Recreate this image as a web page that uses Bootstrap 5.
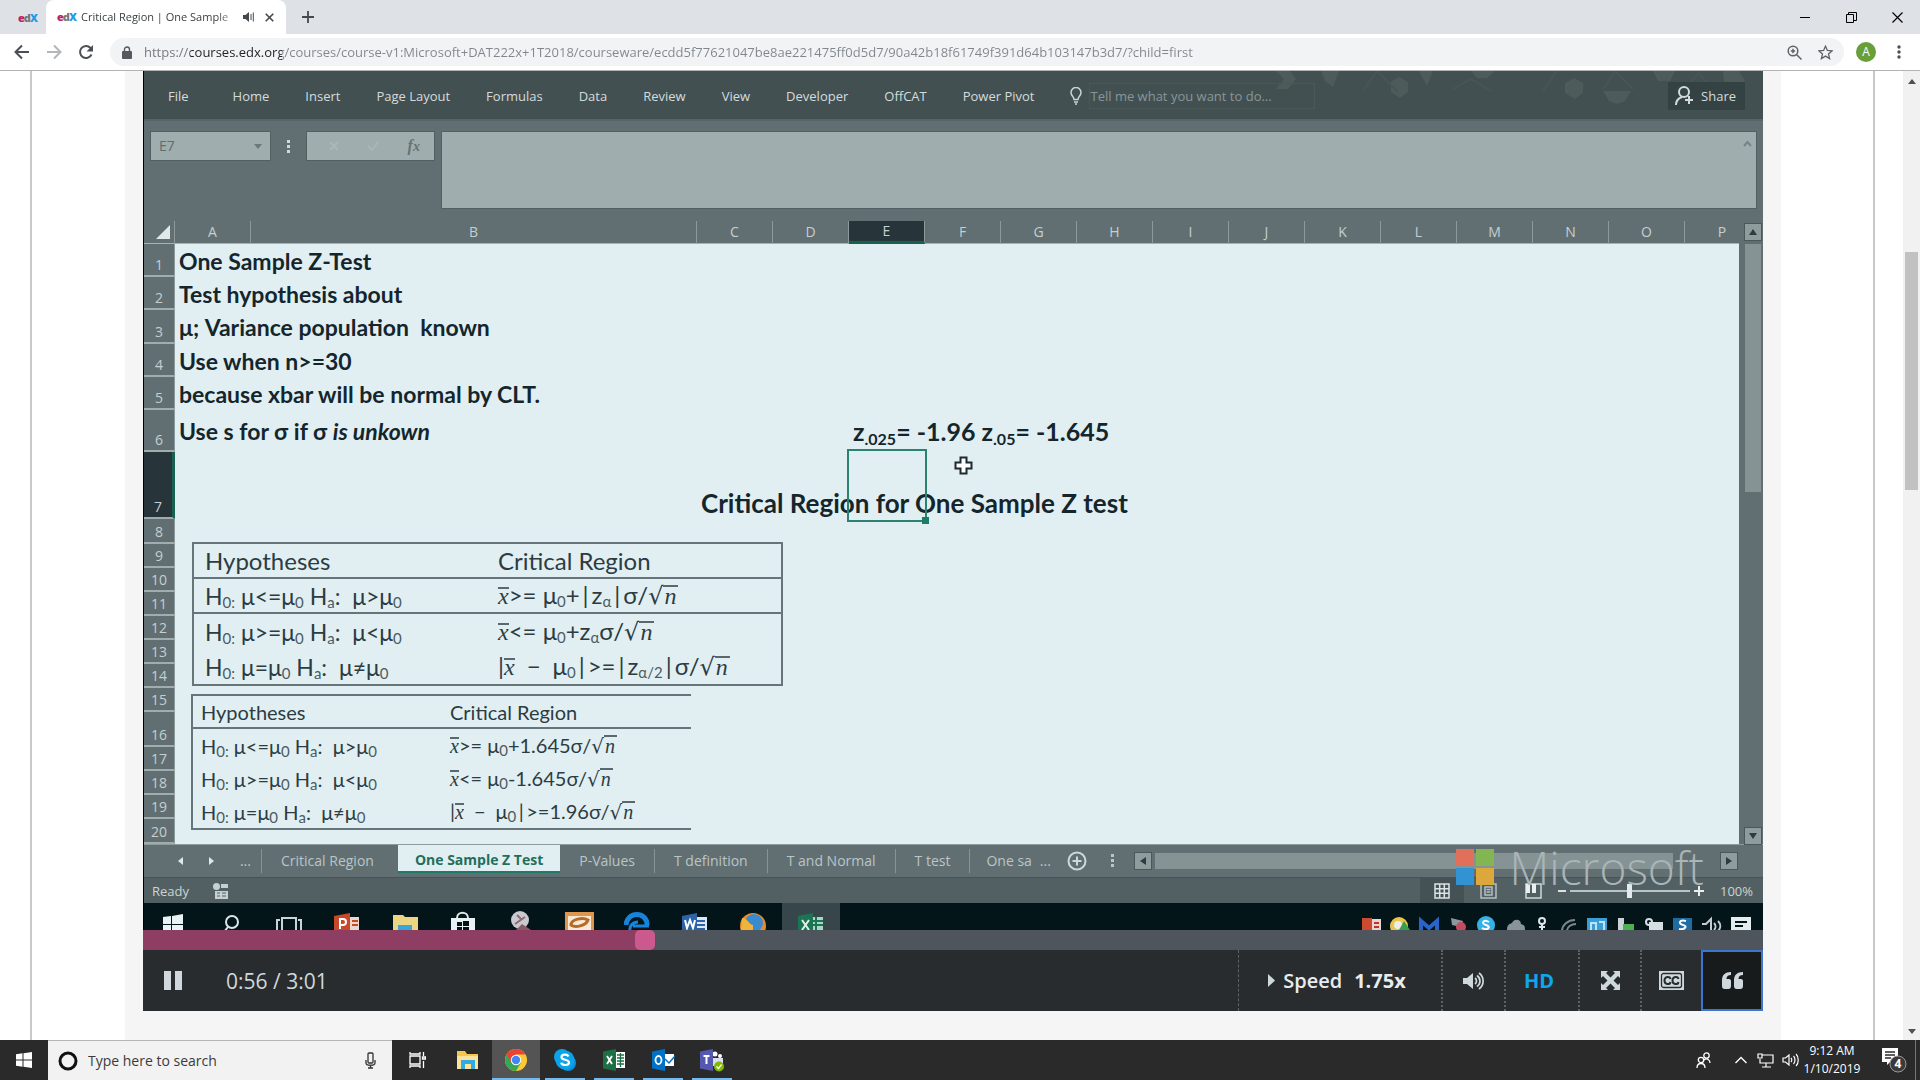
<!DOCTYPE html>
<html lang="en">
<head>
<meta charset="utf-8">
<meta name="viewport" content="width=device-width, initial-scale=1">
<title>Critical Region | One Sample</title>
<link href="https://cdn.jsdelivr.net/npm/bootstrap@5.3.0/dist/css/bootstrap.min.css" rel="stylesheet">
<style>
  body { font-family: "Open Sans", "Noto Sans", sans-serif; font-size: 14px; line-height: 20px; color: #202124; background: #fff; }
  button { border: 0; background: none; padding: 0; color: inherit; font: inherit; }
  input, textarea { font-family: inherit; }
  svg { display: block; flex: none; }

  /* browser frame */
  .tabstrip { height: 34px; background: #dee1e6; }
  .pinned { width: 46px; padding-left: 18px; }
  .edx { font: bold 11px/16px "Open Sans", sans-serif; width: 17px; }
  .edx b:nth-child(1) { color: #b52567; } .edx b:nth-child(2) { color: #777; } .edx b:nth-child(3) { color: #1f9be5; }
  .edx b { margin-right: -1px; }
  .live-tab { width: 240px; background: #fff; border-radius: 8px 8px 0 0; padding: 0 12px 0 11px; font-size: 11px; }
  .tab-title { width: 154px; margin-left: 7px; white-space: nowrap; overflow: hidden; -webkit-mask-image: linear-gradient(90deg,#000 88%,rgba(0,0,0,.3)); mask-image: linear-gradient(90deg,#000 88%,rgba(0,0,0,.3)); color: #3c4043; }
  .winbtn { width: 46px; height: 34px; }
  .toolbar { height: 37px; border-bottom: 1px solid #b3b3b3; padding: 4px 19px 4px 14px; }
  .omni { height: 28px; border-radius: 14px; background: #f1f3f4; padding: 0 11px 0 12px; }
  .omni input { border: 0; outline: 0; padding: 0 0 0 4px; font-size: 13px; color: #80868b; background: linear-gradient(90deg,#70757a 50px,#202124 50px,#202124 142px,#80868b 142px); -webkit-background-clip: text; background-clip: text; -webkit-text-fill-color: transparent; }
  .avatar { width: 20px; height: 20px; border-radius: 50%; background: #689f38; color: #fff; font-size: 12px; margin: 0 21px 0 12px; }

  /* course page */
  .course { min-width: 0; margin-left: 30px; margin-right: 28px; border: solid #c8c8c8; border-width: 0 2px; padding: 0 92px 0 93px; }
  .player-wrap { background: #f5f5f5; padding: 0 18px; height: 100%; }
  .page-scroll { flex: none; width: 17px; background: #f1f1f1; padding-top: 4px; padding-bottom: 6px; }
  .page-thumb { width: 13px; height: 238px; background: #c1c1c1; margin-top: 168px; }

  /* spreadsheet inside the video */
  .video { background: #626f72; border-left: 1px solid #000; color: #c9d4d5; }
  .ribbon { height: 48px; background: #435052; padding: 2px 18px 0 24px; gap: 36px; font-size: 13px; font-weight: 500; color: #d3dcdd; }
  .ribbon .pattern { position: absolute; right: 0; top: 0; }
  .ribbon input { width: 226px; height: 26px; border: 1px solid #4a585a; background: transparent; color: #899698; padding: 0; font-size: 13px; margin-left: 7px; }
  .ribbon input::placeholder { color: #899698; opacity: 1; }
  .share { background: #354244; height: 28px; padding: 0 9px 0 7px; gap: 7px; }
  .fbar { height: 102px; padding: 11px 7px 13px 7px; border-top: 2px solid #586568; }
  .fbox { height: 28px; background: #a0adae; color: #667375; box-shadow: 0 0 0 1px #536063; }
  .fbox input { width: 95px; border: 0; background: transparent; color: #5f6d6f; padding: 0; font-size: 14px; }
  .fxbox { width: 127px; }
  .formula { background: #a0adae; border: 0; resize: none; height: 76px; display: block; box-shadow: 0 0 0 1px #536063; }
  .sheet { table-layout: fixed; width: 100%; border-collapse: separate; border-spacing: 0; color: #14262c; background: #e1eff3; font: bold 23px/28px Lato, "Open Sans", sans-serif; }
  .sheet th { background: #626f72; color: #c4cfd1; font: 14px/18px "Open Sans", sans-serif; text-align: center; padding: 0; }
  .sheet thead th { height: 23px; border-right: 1px solid #8c999b; border-bottom: 1px solid #a5b1b3; }
  .sheet thead th:last-child { border-right: 0; padding-left: 20px; }
  .sheet tbody th { vertical-align: bottom; border-bottom: 2px solid #a0acae; border-right: 1px solid #8c999b; padding-bottom: 1px; }
  .sheet td { padding: 0 0 0 4px; white-space: nowrap; overflow: visible; vertical-align: middle; }
  .sheet thead th.on { background: #27343a; border-bottom: 3px solid #16614f; color: #c4cfd1; }
  .sheet tbody th.on { background: #27343a; border-right: 3px solid #16614f; }
  .sheet .zvals { font-size: 25px; }
  .sheet .heading { font-size: 26px; padding-bottom: 2px; }
  .sheet .cursor-cell { position: relative; }
  .sheet .cursor-cell::before { content: ""; position: absolute; inset: -3px -2px -3px -2px; border: 2px solid #2b8270; }
  .sheet .cursor-cell::after { content: ""; position: absolute; right: -4px; bottom: -5px; width: 7px; height: 7px; background: #1f7a66; }
  .sheet sub { font-size: 16px; line-height: 0; }
  .pointer { position: absolute; left: 810px; top: 235px; }
  .eq { position: absolute; color: #2c3c42; font: 24px/26px Lato, "Open Sans", sans-serif; border: 2px solid #66757a; border-spacing: 0; border-collapse: separate; table-layout: fixed; }
  .eq th, .eq td { font-weight: 400; white-space: nowrap; padding: 0; text-align: left; vertical-align: middle; }
  .eq sub { font-size: 15px; line-height: 0; bottom: -3px; color: #4c5b60; }
  .eq .rule > * { border-bottom: 2px solid #66757a; }
  .eq-one { left: 48px; top: 321px; width: 591px; }
  .eq-one tr { height: 35px; } .eq-one tr > :first-child { width: 304px; padding-left: 11px; }
  .eq-one td:first-child { font-size: 23px; }
  .eq-two { left: 47px; top: 473px; width: 500px; border-right: 0; font-size: 20px; }
  .eq-two tr { height: 33px; } .eq-two tr > :first-child { width: 257px; padding-left: 8px; }
  .vx { font-family: "Liberation Serif", serif; font-style: italic; }
  .bar { border-top: 2px solid #5a696e; line-height: 15px; display: inline-block; }
  .root { border-top: 2px solid #5a696e; line-height: 19px; display: inline-block; font-family: "Liberation Serif", serif; font-style: italic; padding: 0 2px 0 1px; }
  .surd { font-family: "DejaVu Sans", sans-serif; }
  .vscroll { width: 24px; padding: 3px 5px 0 6px; }
  .sbtn { width: 16px; height: 16px; background: #8e9c9e; box-shadow: 0 0 0 1px #4b585b; }
  .vthumb { width: 16px; height: 248px; background: #859395; }
  .sheet-tabs { height: 33px; border-top: 1px solid #8e9b9d; font-size: 14px; color: #b9c5c7; }
  .sheet-tabs .stab { height: 24px; padding: 0 19px; border-right: 1px solid #879496; }
  .sheet-tabs .tabnav { width: 118px; padding: 0 10px 0 34px; }
  .sheet-tabs .stab.live { height: 28px; align-self: flex-start; background: #e1eff3; color: #1f6f5c; font-weight: 700; border: 0; border-bottom: 2px solid #1f7a66; padding: 4px 17px 0; }
  .sheet-tabs .far { margin-right: 26px; }
  .hthumb { height: 16px; background: #859395; }
  .statusbar { height: 26px; background: #536063; border-top: 1px solid #46545a; font-size: 13px; padding: 0 10px 0 8px; }
  .zoomer { -webkit-appearance: none; appearance: none; width: 120px; height: 14px; background: linear-gradient(#b9c4c6,#b9c4c6) center/100% 2px no-repeat; }
  .zoomer::-webkit-slider-thumb { -webkit-appearance: none; width: 5px; height: 14px; background: #e2eaeb; }
  .view-on { width: 44px; height: 25px; background: #445155; }
  .brand { position: absolute; right: 59px; bottom: 39px; gap: 16px; }
  .brand span { font: 300 46px/48px "Open Sans", Lato, sans-serif; color: #a9b5b7; }
  .inner-bar { height: 27px; background: #04151a; overflow: hidden; }
  .inner-bar .slot { width: 58px; }
  .inner-bar .slot.on { background: #37464b; }

  /* player controls */
  .seek { -webkit-appearance: none; appearance: none; display: block; width: 100%; height: 20px; margin: 0; background: linear-gradient(90deg,#8e3e63 31%,#4f555c 31%); }
  .seek::-webkit-slider-thumb { -webkit-appearance: none; width: 20px; height: 20px; border-radius: 5px; background: #cb598d; }
  .controls { height: 61px; background: #282c2e; color: #cfd8dc; font-size: 20px; }
  .controls .ctl { height: 61px; border-left: 2px dotted #5b6367; }
  .controls .speed { width: 203px; padding-right: 6px; color: #e7ecee; border-left: 1px dashed #5b6367; }
  .controls .hd { width: 74px; padding-right: 6px; color: #0ea6ec; }
  .controls .quote { border: 2px solid #3b75d0; background: #171b1c; }
  .elapsed { margin-left: 43px; font-size: 21px; }

  /* desktop taskbar */
  .desk { height: 40px; background: #2a2a2a; color: #fff; }
  .start { width: 48px; height: 40px; }
  .search { width: 344px; height: 40px; background: #f2f2f2; border-top: 1px solid #b5b5b5; color: #3b3b3b; padding: 0 12px 0 10px; }
  .search input { border: 0; background: transparent; outline: 0; font-size: 14px; color: #3b3b3b; padding: 0; margin-left: 10px; }
  .search input::placeholder { color: #3b3b3b; opacity: 1; }
  .app { width: 49px; height: 40px; border-right: 1px solid transparent; background-clip: padding-box; }
  .app:first-child { width: 51px; }
  .app.run { background: linear-gradient(#76b9ed,#76b9ed) center bottom/40px 2px no-repeat; }
  .app.on { background: linear-gradient(#76b9ed,#76b9ed) center bottom/100% 2px no-repeat padding-box, #545454 padding-box; }
  .tray { gap: 9px; }
  .clock { font-size: 12px; line-height: 18px; width: 66px; }
  .peek { width: 5px; border-left: 1px solid #777; }
</style>
<script src="https://cdn.jsdelivr.net/npm/bootstrap@5.3.0/dist/js/bootstrap.bundle.min.js"></script>
</head>
<body class="vh-100 d-flex flex-column overflow-hidden">

<header>
  <div class="tabstrip d-flex">
    <button class="pinned text-start" aria-label="edX tab"><span class="edx"><b>e</b><b>d</b><b>X</b></span></button>
    <div class="live-tab d-flex align-items-center">
      <span class="edx"><b>e</b><b>d</b><b>X</b></span>
      <span class="tab-title">Critical Region | One Sample</span>
      <svg class="ms-2" width="12" height="12" viewBox="0 0 12 12" fill="#45494d"><path d="M0 4h2.500L6 1v10L2.500 8H0zM7.500 3h1v6h-1zM9.800 1.500h1v9h-1z"/></svg>
      <button class="ms-auto" aria-label="Close tab"><svg width="9" height="9" viewBox="0 0 9 9" stroke="#45494d" stroke-width="1.6"><path d="M.7.7l7.600 7.600M8.300.7L.7 8.300"/></svg></button>
    </div>
    <button class="ms-3" aria-label="New tab"><svg width="12" height="12" viewBox="0 0 12 12" stroke="#45494d" stroke-width="1.8"><path d="M6 0v12M0 6h12"/></svg></button>
    <div class="ms-auto d-flex align-items-start">
      <button class="winbtn d-flex justify-content-center align-items-center" aria-label="Minimize"><svg width="10" height="10" stroke="#000"><path d="M0 5.500h10"/></svg></button>
      <button class="winbtn d-flex justify-content-center align-items-center" aria-label="Restore"><svg width="11" height="11" fill="none" stroke="#000"><path d="M.5 2.500h7v8h-7zM2.500 2.500v-2h8v8h-3"/></svg></button>
      <button class="winbtn d-flex justify-content-center align-items-center" aria-label="Close"><svg width="11" height="11" stroke="#000" stroke-width="1.200"><path d="M.5.5l10 10M10.500.5l-10 10"/></svg></button>
    </div>
  </div>
  <div class="toolbar d-flex align-items-center">
    <button aria-label="Back"><svg width="16" height="16" viewBox="0 0 16 16" fill="none" stroke="#4b4f54" stroke-width="2"><path d="M15 8H2M8 1.500L1.500 8 8 14.500"/></svg></button>
    <button class="ms-3" aria-label="Forward"><svg width="16" height="16" viewBox="0 0 16 16" fill="none" stroke="#b4b7ba" stroke-width="2"><path d="M1 8h13M8 1.500L14.500 8 8 14.500"/></svg></button>
    <button class="ms-3 me-3" aria-label="Reload"><svg width="16" height="16" viewBox="0 0 16 16"><path d="M13.500 10.500A6 6 0 1 1 12.500 4L14 5.500" fill="none" stroke="#4b4f54" stroke-width="2"/><path d="M15 1v6.500H8.500z" fill="#4b4f54"/></svg></button>
    <div class="omni d-flex align-items-center flex-grow-1">
      <svg width="10" height="13" viewBox="0 0 10 13"><path d="M1 5h8a1 1 0 0 1 1 1v6a1 1 0 0 1-1 1H1a1 1 0 0 1-1-1V6a1 1 0 0 1 1-1z" fill="#55595e"/><path d="M2.500 6V3.500a2.500 2.500 0 0 1 5 0V6" fill="none" stroke="#55595e" stroke-width="1.400"/></svg>
      <input class="flex-grow-1 ms-2 me-3" aria-label="Address" value="https://courses.edx.org/courses/course-v1:Microsoft+DAT222x+1T2018/courseware/ecdd5f77621047be8ae221475ff0d5d7/90a42b18f61749f391d64b103147b3d7/?child=first">
      <svg class="me-3" width="15" height="15" viewBox="0 0 15 15" fill="none" stroke="#5f6368" stroke-width="1.500"><circle cx="6" cy="6" r="4.800"/><path d="M9.500 9.500l5 5M3.800 6h4.400M6 3.800v4.400"/></svg>
      <svg width="15" height="15" viewBox="0 0 15 15" fill="none" stroke="#5f6368" stroke-width="1.300"><path d="M7.500 1.200l1.900 4.300 4.600.4-3.500 3.100 1.100 4.600-4.100-2.500-4.100 2.500 1.100-4.600L1 5.900l4.600-.4z"/></svg>
    </div>
    <span class="avatar d-flex justify-content-center align-items-center">A</span>
    <button aria-label="Menu"><svg width="4" height="14" fill="#4b4f54"><circle cx="2" cy="2" r="1.700"/><circle cx="2" cy="7" r="1.700"/><circle cx="2" cy="12" r="1.700"/></svg></button>
  </div>
</header>

<main class="flex-grow-1 d-flex overflow-hidden">
  <div class="course flex-grow-1">
    <div class="player-wrap">
      <div class="video position-relative">
        <div class="ribbon d-flex align-items-center position-relative">
          <svg class="pattern" width="600" height="48" viewBox="0 0 600 48" fill="#53615f" opacity=".65"><path d="M113 0h14l6 8-8 10h-12l8-10zM158 0h18l-6 16-8-6zM228 11l8-5 9 5v10l-8 6-9-6zM256 0h14l-6 15zM402 12l9-5 9 5v10l-8 6-10-6zM440 20h28l-6 10-8 3-8-3zM308 0h24l-8 7h-10zM490 0h22l-5 10h-12zM560 0h16l6 10-10 10h-10z"/><path d="M200 20l14-20 20 20M290 18l18-10 20 12M380 20l14-20M440 18l12-18 18 18M520 20l16-18 14 18" fill="none" stroke="#4b5958" stroke-width="2"/></svg>
          <button class="me-2">File</button><button>Home</button><button>Insert</button><button>Page Layout</button><button>Formulas</button><button>Data</button><button>Review</button><button>View</button><button>Developer</button><button>OffCAT</button><button>Power Pivot</button>
          <div class="d-flex align-items-center position-relative">
            <svg width="12" height="18" viewBox="0 0 12 18" fill="none" stroke="#c9d4d5" stroke-width="1.500"><path d="M4 12.500c0-3-3-3.500-3-7a5 5 0 0 1 10 0c0 3.500-3 4-3 7zM4 15h4M5 17h2"/></svg>
            <input type="text" aria-label="Tell me" placeholder="Tell me what you want to do...">
          </div>
          <button class="share d-flex align-items-center ms-auto position-relative"><svg width="19" height="20" viewBox="0 0 19 20" fill="none" stroke="#d3dcdd" stroke-width="2"><circle cx="9" cy="6" r="5"/><path d="M1 19c0-5 3-7 6-8M14 10v8M10 14h8"/></svg>Share</button>
        </div>
        <div class="fbar d-flex align-items-start">
          <div class="fbox d-flex align-items-center justify-content-between px-2"><input type="text" aria-label="Name box" value="E7"><svg width="8" height="5"><path d="M0 0h8L4 5z" fill="#6c797b"/></svg></div>
          <svg class="mx-3 mt-2" width="5" height="14" fill="#d0dadb"><path d="M1 0h3v3H1zM1 5h3v3H1zM1 10h3v3H1z"/></svg>
          <div class="fbox fxbox d-flex align-items-center justify-content-around ps-2"><svg width="10" height="10" stroke="#aab6b7" stroke-width="2"><path d="M1 1l8 8M9 1L1 9"/></svg><svg width="12" height="10" fill="none" stroke="#aab6b7" stroke-width="2"><path d="M1 5l4 4 6-8"/></svg><i class="vx fs-6 fw-bold">f<small>x</small></i></div>
          <div class="position-relative flex-grow-1 ms-2">
            <textarea class="formula w-100" aria-label="Formula"></textarea>
            <svg class="position-absolute top-0 end-0 mt-2 me-1" width="9" height="8" fill="none" stroke="#76848a" stroke-width="2"><path d="M1 6l3.500-4L8 6"/></svg>
          </div>
        </div>
        <div class="d-flex">
          <div class="flex-grow-1 position-relative">
            <table class="sheet">
              <colgroup><col style="width:31px"><col style="width:76px"><col style="width:446px"><col style="width:76px"><col style="width:76px"><col style="width:76px"><col style="width:76px"><col style="width:76px"><col style="width:76px"><col style="width:76px"><col style="width:76px"><col style="width:76px"><col style="width:76px"><col style="width:76px"><col style="width:76px"><col style="width:76px"><col></colgroup>
              <thead><tr><th><svg class="ms-auto me-1" width="14" height="14"><path d="M14 0v14H0z" fill="#dfe9ea"/></svg></th><th>A</th><th>B</th><th>C</th><th>D</th><th class="on">E</th><th>F</th><th>G</th><th>H</th><th>I</th><th>J</th><th>K</th><th>L</th><th>M</th><th>N</th><th>O</th><th>P</th></tr></thead>
              <tbody>
                <tr style="height:33px"><th>1</th><td colspan="16">One Sample Z-Test</td></tr>
                <tr style="height:33px"><th>2</th><td colspan="16">Test hypothesis about</td></tr>
                <tr style="height:34px"><th>3</th><td colspan="16">μ; Variance population&nbsp; known</td></tr>
                <tr style="height:33px"><th>4</th><td colspan="16">Use when n&gt;=30</td></tr>
                <tr style="height:33px"><th>5</th><td colspan="16">because xbar will be normal by CLT.</td></tr>
                <tr style="height:42px"><th>6</th><td colspan="4">Use s for σ if σ <i>is unkown</i></td><td class="zvals" colspan="12">z<sub>.025</sub>= -1.96 z<sub>.05</sub>= -1.645</td></tr>
                <tr style="height:67px"><th class="on">7</th><td></td><td></td><td class="heading align-bottom">Critical Region for One Sample Z test</td><td></td><td class="cursor-cell"></td><td colspan="11"></td></tr>
                <tr style="height:25px"><th>8</th><td colspan="16"></td></tr>
                <tr style="height:24px"><th>9</th><td colspan="16"></td></tr>
                <tr style="height:24px"><th>10</th><td colspan="16"></td></tr>
                <tr style="height:24px"><th>11</th><td colspan="16"></td></tr>
                <tr style="height:24px"><th>12</th><td colspan="16"></td></tr>
                <tr style="height:24px"><th>13</th><td colspan="16"></td></tr>
                <tr style="height:24px"><th>14</th><td colspan="16"></td></tr>
                <tr style="height:24px"><th>15</th><td colspan="16"></td></tr>
                <tr style="height:35px"><th>16</th><td colspan="16"></td></tr>
                <tr style="height:24px"><th>17</th><td colspan="16"></td></tr>
                <tr style="height:24px"><th>18</th><td colspan="16"></td></tr>
                <tr style="height:24px"><th>19</th><td colspan="16"></td></tr>
                <tr style="height:25px"><th>20</th><td colspan="16"></td></tr>
              </tbody>
            </table>
            <svg class="pointer" width="19" height="19" viewBox="0 0 19 19"><path d="M6.500 1.500h6v5h5v6h-5v5h-6v-5h-5v-6h5z" fill="#fff" stroke="#1d2a2f" stroke-width="2"/></svg>
            <table class="eq eq-one">
              <tr class="rule"><th>Hypotheses</th><th>Critical Region</th></tr>
              <tr class="rule"><td>H<sub>0:</sub> μ&lt;=μ<sub>0</sub> H<sub>a</sub>:&nbsp; μ&gt;μ<sub>0</sub></td><td><span class="vx bar">x</span>&gt;= μ<sub>0</sub>+&thinsp;|&thinsp;z<sub>α</sub>&thinsp;|&thinsp;σ/<span class="surd">√</span><span class="root">n</span></td></tr>
              <tr><td>H<sub>0:</sub> μ&gt;=μ<sub>0</sub> H<sub>a</sub>:&nbsp; μ&lt;μ<sub>0</sub></td><td><span class="vx bar">x</span>&lt;= μ<sub>0</sub>+z<sub>α</sub>σ/<span class="surd">√</span><span class="root">n</span></td></tr>
              <tr><td>H<sub>0:</sub> μ=μ<sub>0</sub> H<sub>a</sub>:&nbsp; μ≠μ<sub>0</sub></td><td>|<span class="vx bar">x</span>&ensp;−&ensp;μ<sub>0</sub>&thinsp;|&thinsp;&gt;=&thinsp;|&thinsp;z<sub>α/2</sub>&thinsp;|&thinsp;σ/<span class="surd">√</span><span class="root">n</span></td></tr>
            </table>
            <table class="eq eq-two">
              <tr class="rule"><th>Hypotheses</th><th>Critical Region</th></tr>
              <tr><td>H<sub>0:</sub> μ&lt;=μ<sub>0</sub> H<sub>a</sub>:&nbsp; μ&gt;μ<sub>0</sub></td><td><span class="vx bar">x</span>&gt;= μ<sub>0</sub>+1.645σ/<span class="surd">√</span><span class="root">n</span></td></tr>
              <tr><td>H<sub>0:</sub> μ&gt;=μ<sub>0</sub> H<sub>a</sub>:&nbsp; μ&lt;μ<sub>0</sub></td><td><span class="vx bar">x</span>&lt;= μ<sub>0</sub>-1.645σ/<span class="surd">√</span><span class="root">n</span></td></tr>
              <tr><td>H<sub>0:</sub> μ=μ<sub>0</sub> H<sub>a</sub>:&nbsp; μ≠μ<sub>0</sub></td><td>|<span class="vx bar">x</span>&ensp;−&ensp;μ<sub>0</sub>&thinsp;|&thinsp;&gt;=1.96σ/<span class="surd">√</span><span class="root">n</span></td></tr>
            </table>
          </div>
          <div class="vscroll d-flex flex-column">
            <button class="sbtn d-flex justify-content-center align-items-center" aria-label="Scroll up"><svg width="8" height="6"><path d="M4 0l4 6H0z" fill="#2e3b40"/></svg></button>
            <div class="vthumb mt-1"></div>
            <button class="sbtn mt-auto d-flex justify-content-center align-items-center" aria-label="Scroll down"><svg width="8" height="6"><path d="M0 0h8L4 6z" fill="#2e3b40"/></svg></button>
          </div>
        </div>
        <div class="sheet-tabs d-flex align-items-center">
          <div class="stab tabnav d-flex align-items-center justify-content-between"><svg width="5" height="8"><path d="M5 0v8L0 4z" fill="#e0e8e9"/></svg><svg width="5" height="8"><path d="M0 0v8l5-4z" fill="#e0e8e9"/></svg><span>...</span></div>
          <button class="stab border-0 pe-4">Critical Region</button>
          <button class="stab live">One Sample Z Test</button>
          <button class="stab">P-Values</button><button class="stab">T definition</button><button class="stab">T and Normal</button><button class="stab">T test</button>
          <button class="ms-3">One sa</button><span class="ms-2">...</span>
          <button class="ms-3" aria-label="New sheet"><svg width="20" height="20" fill="none" stroke="#ced8d9" stroke-width="2"><circle cx="10" cy="10" r="8.500"/><path d="M10 5.500v9M5.500 10h9"/></svg></button>
          <svg class="ms-4 me-3" width="4" height="14" fill="#b9c5c7"><path d="M0 0h3v3H0zM0 5h3v3H0zM0 10h3v3H0z"/></svg>
          <button class="sbtn ms-1 me-1 d-flex justify-content-center align-items-center" aria-label="Scroll left"><svg width="6" height="8"><path d="M6 0v8L0 4z" fill="#2e3b40"/></svg></button>
          <div class="hthumb flex-grow-1 me-5"></div>
          <button class="sbtn far d-flex justify-content-center align-items-center" aria-label="Scroll right"><svg width="6" height="8"><path d="M0 0v8l6-4z" fill="#2e3b40"/></svg></button>
        </div>
        <div class="statusbar d-flex align-items-center">
          <span>Ready</span>
          <svg class="ms-4" width="16" height="16" viewBox="0 0 16 16" fill="#c6d0d2"><circle cx="3.500" cy="3.500" r="3.500"/><path d="M8 1h7v4H8zM2 8h13v8H2z"/><path d="M4 10h3M9 10h4M4 13h3M9 13h4" stroke="#536063"/></svg>
          <div class="ms-auto d-flex align-items-center">
            <button class="view-on d-flex justify-content-center align-items-center" aria-label="Normal view"><svg width="16" height="16" fill="none" stroke="#dbe4e5" stroke-width="1.500"><path d="M1 1h14v14H1zM1 5.700h14M1 10.300h14M5.700 1v14M10.300 1v14"/></svg></button>
            <button class="ms-3" aria-label="Page layout view"><svg width="17" height="16" fill="none" stroke="#b4c0c2" stroke-width="1.500"><path d="M1 1h15v14H1zM5 4h7v8H5zM6.500 6.500h4M6.500 9h4"/></svg></button>
            <button class="ms-4 ps-1 me-3" aria-label="Page break view"><svg width="17" height="16" fill="none" stroke="#ced8d9" stroke-width="1.500"><path d="M1 1h15v14H1z"/><path d="M1 1h4v9H1zM7 1h4v9H7z" fill="#e8eff0" stroke="none"/></svg></button>
            <svg class="me-1" width="8" height="8"><path d="M0 3h8v2H0z" fill="#dbe4e5"/></svg>
            <input class="zoomer" type="range" aria-label="Zoom" min="0" max="200" value="100">
            <svg class="ms-1 me-3" width="10" height="10"><path d="M0 4h10v2H0zM4 0h2v10H4z" fill="#e8eff0"/></svg>
            <span>100%</span>
          </div>
        </div>
        <div class="inner-bar d-flex">
          <div class="slot"><svg class="mx-auto" width="20" height="27"><path d="M0 14l8-1v8H0zM9 13l11-2v10H9zM0 22h8v5H0zM9 22h11v5H9z" fill="#e8f2f4"/></svg></div>
          <div class="slot"><svg class="mx-auto" width="20" height="27" fill="none" stroke="#dce6e8" stroke-width="2"><circle cx="11" cy="19" r="6"/><path d="M7 24l-4 5"/></svg></div>
          <div class="slot"><svg class="mx-auto" width="26" height="27" fill="none" stroke="#c9d4d6" stroke-width="2"><path d="M6 15h14v14H6zM4 17H1v12M22 17h3v12"/></svg></div>
          <div class="slot"><svg class="mx-auto" width="28" height="27"><path d="M12 14h14v13H12z" fill="#e9d8d0"/><path d="M1 13l16-3v17H1z" fill="#c8492a"/><path d="M7 26V16h3a3 3 0 0 1 0 6H7" fill="none" stroke="#fff" stroke-width="2"/><path d="M19 18h6M19 22h6" stroke="#c8492a" stroke-width="2"/></svg></div>
          <div class="slot"><svg class="mx-auto" width="27" height="27"><path d="M1 12h10l2 2h13v13H1z" fill="#ecd582"/><path d="M6 22h14v5H6z" fill="#36a7dc"/></svg></div>
          <div class="slot"><svg class="mx-auto" width="26" height="27"><path d="M7 15c0-7 11-7 11 0" fill="none" stroke="#dfe9ea" stroke-width="2"/><path d="M1 15h24v12H1z" fill="#e8f2f4"/><path d="M7 19h5v4H7zM13 18h6v5h-6zM7 24h5v3H7zM13 24h6v3h-6z" fill="#04151a"/></svg></div>
          <div class="slot"><svg class="mx-auto" width="26" height="27"><circle cx="12" cy="17" r="9" fill="#c9c9cf"/><path d="M8 27l6-6 9 6" fill="#8b5a66"/><path d="M7 21l10-7M9 12l5 5" stroke="#8b6a74" stroke-width="2"/></svg></div>
          <div class="slot"><svg class="mx-auto" width="29" height="27"><path d="M0 9h29v18H0z" fill="#e0974d"/><path d="M3 13h23v14H3z" fill="#f7ead7"/><path d="M6 22c0-6 12-8 17-5-2 6-13 8-17 5z" fill="none" stroke="#b86b28" stroke-width="3"/></svg></div>
          <div class="slot"><svg class="mx-auto" width="26" height="27" fill="none" stroke="#1784dc"><path d="M2 22C3 8 23 8 23 22" stroke-width="5"/><path d="M6 28c-1-5 3-9 8-9M9 23h16" stroke-width="3"/></svg></div>
          <div class="slot"><svg class="mx-auto" width="28" height="27"><path d="M13 14h13v13H13z" fill="#dce8f4"/><path d="M15 18h9M15 22h9M15 26h9" stroke="#2d62a8" stroke-width="2"/><path d="M1 13l15-3v17H1z" fill="#2d62a8"/><path d="M4 17l2 8 3-8 3 8 2-8" fill="none" stroke="#fff" stroke-width="2"/></svg></div>
          <div class="slot"><svg class="mx-auto" width="26" height="27"><circle cx="13" cy="23" r="13" fill="#e88a2c"/><circle cx="14" cy="20" r="9" fill="#3a8ad0"/><path d="M2 15c6 0 6 6 11 7v5H1z" fill="#f0b43c"/></svg></div>
          <div class="slot on"><svg class="mx-auto" width="28" height="27"><path d="M13 14h13v13H13z" fill="#a9d4c6"/><path d="M13 18h13M13 22h13M19 14v13" stroke="#1d7453" stroke-width="2"/><path d="M1 13l15-3v17H1z" fill="#1d7453"/><path d="M5 17l7 10M12 17L5 27" stroke="#dff1ea" stroke-width="2"/></svg></div>
          <div class="tray ms-auto d-flex me-2 pe-1">
            <svg width="19" height="27"><path d="M0 16h19v11H0z" fill="#e4d5cf"/><path d="M0 15h10v12H0z" fill="#cc4a30"/><path d="M12 20h5M12 24h5" stroke="#b33" stroke-width="2"/></svg>
            <svg width="20" height="27"><circle cx="9" cy="23" r="9" fill="#e7c64b"/><circle cx="8" cy="22" r="4" fill="#ececec"/><path d="M9 27l5-9 6 9z" fill="#37a04c"/></svg>
            <svg width="20" height="27"><path d="M2 27V18l8 7 8-7v9" fill="none" stroke="#2a64c8" stroke-width="4"/></svg>
            <svg width="20" height="27"><path d="M3 15l12 3-2 6-9-2z" fill="#8d989c"/><circle cx="13" cy="24" r="5" fill="#c54b5f"/></svg>
            <svg width="20" height="27"><circle cx="9" cy="22" r="9" fill="#36b1e8"/><path d="M12 19c-6-4-8 2-3 3 6 2 1 6-4 3" fill="none" stroke="#fff" stroke-width="2"/></svg>
            <svg width="20" height="27"><path d="M1 27c0-6 3-6 5-7 2-5 9-4 9 1 4 1 4 3 4 6z" fill="#8a9498"/></svg>
            <svg width="14" height="27" fill="none" stroke="#dce5e7" stroke-width="2"><circle cx="7" cy="18" r="3"/><path d="M7 21v6M4 24h6"/></svg>
            <svg width="20" height="27" fill="none" stroke="#7b878b" stroke-width="2"><path d="M4 28c0-6 6-11 13-11M9 28c0-4 4-7 9-7"/></svg>
            <svg width="20" height="27"><path d="M0 15h20v12H0z" fill="#3a9dd8"/><path d="M4 27v-7h5v7M12 19h5v8" fill="none" stroke="#b9e3f7" stroke-width="2"/></svg>
            <svg width="19" height="27"><path d="M2 15h6v12H2z" fill="#c9d2d4"/><path d="M7 21h11v6H7z" fill="#4caf50"/></svg>
            <svg width="20" height="27"><path d="M5 19h14v8H5z" fill="#d5dee0"/><circle cx="5" cy="19" r="3" fill="none" stroke="#d5dee0" stroke-width="2"/></svg>
            <svg width="19" height="27"><path d="M0 15h19v12H0z" fill="#1e6ca3"/><path d="M13 18c-7-2-8 3-3 4s2 5-4 4" fill="none" stroke="#fff" stroke-width="2"/></svg>
            <svg width="21" height="27" fill="none" stroke="#c3cdd0" stroke-width="2"><path d="M1 21h4l5-5v12M13 20c2 2 2 5 0 7M17 18c3 3 3 7 0 10"/></svg>
            <svg width="20" height="27"><path d="M0 14h20v13H0z" fill="#e4ecee"/><path d="M4 19h12M4 23h8" stroke="#04151a" stroke-width="2"/></svg>
          </div>
        </div>
        <div class="brand d-flex align-items-center">
          <svg width="38" height="36"><path d="M0 0h18v17H0z" fill="#e0705a"/><path d="M20 0h18v17H20z" fill="#83b553"/><path d="M0 19h18v17H0z" fill="#3292d2"/><path d="M20 19h18v17H20z" fill="#dca83c"/></svg>
          <span>Microsoft</span>
        </div>
      </div>
      <input class="seek" type="range" aria-label="Video position" min="0" max="181" step="0.1" value="55.7">
      <div class="controls d-flex align-items-center">
        <button class="ps-3 ms-1" aria-label="Pause"><svg width="20" height="19" fill="#cfd8dc"><path d="M1 0h7v19H1zM12 0h7v19h-7z"/></svg></button>
        <span class="elapsed">0:56 / 3:01</span>
        <button class="ctl speed ms-auto d-flex align-items-center justify-content-center"><svg class="me-2" width="7" height="13"><path d="M0 0l7 6.500L0 13z" fill="#cfd8dc"/></svg><span class="fw-semibold">Speed</span><b class="ms-2 ps-1">1.75x</b></button>
        <button class="ctl d-flex align-items-center justify-content-center" style="width:63px" aria-label="Volume"><svg width="21" height="18" viewBox="0 0 21 18"><path d="M0 6h4l6-5v16l-6-5H0z" fill="#cfd8dc"/><path d="M12 6c2 1.500 2 4.500 0 6M14 3.500c4 3 4 8 0 11M16 1c5.500 4 5.500 12 0 16" fill="none" stroke="#cfd8dc" stroke-width="1.700"/></svg></button>
        <button class="ctl hd fw-bold">HD</button>
        <button class="ctl d-flex align-items-center justify-content-center" style="width:62px" aria-label="Full screen"><svg width="19" height="19" viewBox="0 0 19 19" fill="#cfd8dc"><path d="M0 0h7L5 2l4.500 4.500L14 2l-2-2h7v7l-2-2-4.500 4.500L17 14l2-2v7h-7l2-2-4.500-4.500L5 17l2 2H0v-7l2 2 4.500-4.500L2 5 0 7z"/></svg></button>
        <button class="ctl d-flex align-items-center justify-content-center" style="width:61px" aria-label="Captions"><svg width="25" height="19" viewBox="0 0 25 19"><path d="M0 0h25v19H0z" fill="#cfd8dc"/><rect x="2.500" y="2.500" width="20" height="14" rx="2" fill="none" stroke="#282c2e" stroke-width="1.300"/><path d="M11.500 8c-.5-3-6-3-6 1.500s5.500 4.500 6 1.500M19.500 8c-.5-3-6-3-6 1.500s5.500 4.500 6 1.500" fill="none" stroke="#282c2e" stroke-width="2"/></svg></button>
        <button class="ctl quote d-flex align-items-center justify-content-center" style="width:62px" aria-label="Transcript"><svg width="21" height="17" viewBox="0 0 21 17" fill="#cfd8dc"><path d="M9 0v3C6 3 4.500 4.500 4.500 7H7c1.500 0 2 1 2 2v5c0 2-1 3-2.500 3h-4C1 17 0 16 0 14V8c0-5 3-8 9-8zM21 0v3c-3 0-4.500 1.500-4.500 4H19c1.500 0 2 1 2 2v5c0 2-1 3-2.500 3h-4c-1.500 0-2.500-1-2.500-3V8c0-5 3-8 9-8z"/></svg></button>
      </div>
    </div>
  </div>
  <div class="page-scroll d-flex flex-column align-items-center">
    <svg class="mt-1" width="8" height="5"><path d="M4 0l4 5H0z" fill="#505050"/></svg>
    <div class="page-thumb"></div>
    <svg class="mt-auto" width="8" height="5"><path d="M0 0h8L4 5z" fill="#505050"/></svg>
  </div>
</main>

<footer class="desk d-flex align-items-center">
  <button class="start d-flex align-items-center justify-content-center" aria-label="Start"><svg width="16" height="16" fill="#fff"><path d="M0 2.200L6.500 1.300v6.200H0zM7.500 1.200L16 0v7.500H7.500zM0 8.500h6.500v6.200L0 13.800zM7.500 8.500H16V16l-8.500-1.200z"/></svg></button>
  <div class="search d-flex align-items-center">
    <svg width="20" height="20" fill="none" stroke="#111" stroke-width="3"><circle cx="10" cy="10" r="8"/></svg>
    <input class="flex-grow-1" type="text" aria-label="Search" placeholder="Type here to search">
    <svg width="18" height="17" viewBox="0 0 18 17" fill="none" stroke="#333" stroke-width="1.300"><rect x="6" y="1" width="5" height="10" rx="1"/><path d="M4 8v3c0 3 9 3 9 0V8M8.500 13.500V16M6 16h5"/></svg>
  </div>
  <div class="d-flex">
    <button class="app d-flex align-items-center justify-content-center" aria-label="Task view"><svg width="17" height="16" fill="none" stroke="#fff" stroke-width="1.300"><path d="M1 4h10v8H1zM1 0v2h10V0M1 16v-2h10v2M14.500 0v4M14.500 9v7M13.500 5h3v2h-3z"/></svg></button>
    <button class="app d-flex align-items-center justify-content-center" aria-label="File Explorer"><svg width="23" height="19"><path d="M1 0h8l2 3h11v15H1z" fill="#f5c84c"/><path d="M1 5h21v13H1z" fill="#fde39a"/><path d="M5 9h14v9h-4v-5h-6v5H5z" fill="#33a9e2"/></svg></button>
    <button class="app on d-flex align-items-center justify-content-center" aria-label="Chrome"><svg width="22" height="22" viewBox="0 0 22 22"><circle cx="11" cy="11" r="11" fill="#fcc934"/><path d="M1.500 5.500A11 11 0 0 0 11 22l4.800-8.200L11 11z" fill="#34a853"/><path d="M1.500 5.500A11 11 0 0 1 20.500 5.500H11L6.200 13.700z" fill="#ea4335"/><circle cx="11" cy="11" r="5.200" fill="#fff"/><circle cx="11" cy="11" r="4.200" fill="#4285f4"/></svg></button>
    <button class="app run d-flex align-items-center justify-content-center" aria-label="Skype"><svg width="22" height="22" viewBox="0 0 22 22"><circle cx="8" cy="8" r="8" fill="#0aa5ea"/><circle cx="14" cy="14" r="8" fill="#0a8fdc"/><circle cx="11" cy="11" r="9.500" fill="#0ca3ea"/><path d="M14.500 7.500c-1-2.500-7-2.500-7 .7 0 3.400 7.500 1.800 7.500 5.300 0 3.300-6.500 3.300-8 .2" fill="none" stroke="#fff" stroke-width="2.200"/></svg></button>
    <button class="app run d-flex align-items-center justify-content-center" aria-label="Excel"><svg width="23" height="22"><path d="M12 3h10v16H12z" fill="#fff"/><path d="M14 6h7M14 9h7M14 12h7M14 15h7M17.500 4v14" stroke="#1d7044" stroke-width="1.300"/><path d="M0 2.500L13 0v22L0 19.500z" fill="#1d7044"/><path d="M4 7l5 8M9 7l-5 8" stroke="#fff" stroke-width="1.800"/></svg></button>
    <button class="app run d-flex align-items-center justify-content-center" aria-label="Outlook"><svg width="23" height="22"><path d="M12 5h10v12H12z" fill="#fff"/><path d="M13 10l4 4 6-7" fill="none" stroke="#0072c6" stroke-width="1.500"/><path d="M0 2.500L13 0v22L0 19.500z" fill="#0072c6"/><ellipse cx="6.500" cy="11" rx="3" ry="4" fill="none" stroke="#fff" stroke-width="1.800"/></svg></button>
    <button class="app run d-flex align-items-center justify-content-center" aria-label="Teams"><svg width="24" height="24"><circle cx="15" cy="6" r="2.500" fill="#fff"/><circle cx="20" cy="8" r="2" fill="#fff"/><path d="M12 10h11v8H12z" fill="#dcdcf5"/><path d="M0 3.500L13 1v22L0 20.500z" fill="#5558af"/><path d="M3.500 8h6M6.500 8v8" stroke="#fff" stroke-width="2"/><circle cx="19" cy="18.500" r="5" fill="#7fba00"/><path d="M16.500 18.500l2 2 3-4" fill="none" stroke="#fff" stroke-width="1.300"/></svg></button>
  </div>
  <div class="ms-auto d-flex align-items-center h-100">
    <svg width="15" height="16" fill="none" stroke="#fff" stroke-width="1.300"><circle cx="10.500" cy="3.500" r="2.700"/><path d="M8 8c3-2.500 6 0 6 3"/><circle cx="5" cy="8" r="2.700"/><path d="M1 16c0-6 8-6 8 0"/></svg>
    <svg class="ms-4" width="12" height="8" fill="none" stroke="#fff" stroke-width="1.400"><path d="M.5 7L6 1.500 11.500 7"/></svg>
    <svg class="ms-2" width="19" height="15" viewBox="-2 0 19 15" fill="none" stroke="#fff" stroke-width="1.200"><path d="M5 2h11v8H3V6M1 1h4v4H1zM9 10v4M5 14h9"/></svg>
    <svg width="17" height="14" class="ms-2" fill="none" stroke="#fff" stroke-width="1.200"><path d="M1 5h2.500L7 2v10L3.500 9H1zM9 5c1 1 1 3 0 4M11.500 3c2 2 2 6 0 8M14 1c3 3 3 9 0 12"/></svg>
    <div class="clock text-center">9:12 AM<br>1/10/2019</div>
    <svg width="26" height="26" viewBox="0 0 26 26" class="ms-3 me-2"><path d="M1 1h16v14H9l-3 3v-3H1z" fill="#fff"/><path d="M4 5h10M4 8h10M4 11h6" stroke="#2a2a2a" stroke-width="1.300"/><circle cx="17" cy="17" r="8" fill="#3a3a3a" stroke="#9a9a9a"/><text x="17" y="21" font-size="12" font-weight="bold" fill="#fff" text-anchor="middle">4</text></svg>
    <div class="peek h-100"></div>
  </div>
</footer>
</body>
</html>
